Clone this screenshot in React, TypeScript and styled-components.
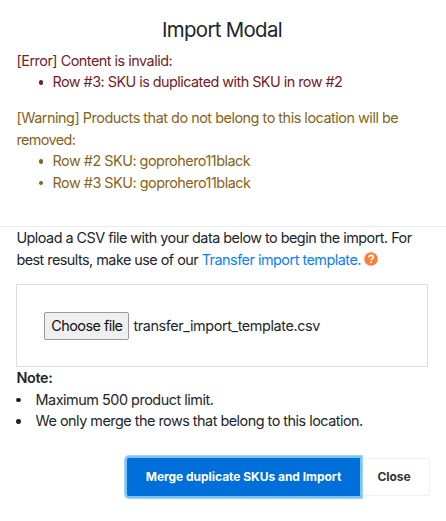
import React from "react";
import styled, { createGlobalStyle } from "styled-components";

const GlobalStyle = createGlobalStyle`
  *, *::before, *::after { box-sizing: border-box; }
  body {
    margin: 0;
    background: #fff;
    color: #212529;
    font-family: Inter, "Liberation Sans", sans-serif;
    font-size: 14.4px;
    line-height: 21.6px;
  }
`;

const Modal = styled.main`
  display: flex;
  flex-direction: column;
  width: 446px;
  height: 521px;
  overflow: hidden;
`;

const Header = styled.header`
  height: 227px;
  padding: 17px 17px 0 16.5px;
  border-bottom: 1px solid #e9ecef;
`;

const Title = styled.h1`
  margin: 0 0 6.5px;
  padding-right: 1.5px;
  font-size: 20.4px;
  font-weight: 400;
  line-height: 26px;
  letter-spacing: -0.67px;
  text-align: center;
`;

const Message = styled.section<{ $tone: "error" | "warning" }>`
  margin-bottom: 14.4px;
  color: ${(p) => (p.$tone === "error" ? "#721c24" : "#856418")};
`;

const Line = styled.div<{ $track?: number }>`
  white-space: nowrap;
  letter-spacing: ${(p) => p.$track ?? 0}px;
`;

const Run = styled.span<{ $track?: number }>`
  letter-spacing: ${(p) => p.$track ?? 0}px;
`;

const List = styled.ul<{ $indent: number; $gap: number }>`
  margin: 0;
  padding: 0 0 0 ${(p) => p.$indent}px;
  list-style: none;
  --gap: ${(p) => p.$gap}px;
`;

const Item = styled.li<{ $track?: number }>`
  display: flex;
  align-items: center;
  gap: var(--gap);
  white-space: nowrap;
  letter-spacing: ${(p) => p.$track ?? 0}px;

  &::before {
    content: "";
    width: 4.6px;
    height: 4.6px;
    margin-top: 1px;
    border-radius: 50%;
    background: currentColor;
  }
`;

const Body = styled.div`
  padding: 0 18px 0 16.4px;
`;

const Link = styled.a<{ $track?: number }>`
  color: #087ffb;
  text-decoration: none;
  letter-spacing: ${(p) => p.$track ?? 0}px;
`;

const Help = styled.svg`
  width: 14px;
  height: 14px;
  margin-left: 3.5px;
  vertical-align: -1px;
`;

const DropArea = styled.div`
  display: flex;
  align-items: center;
  gap: 4px;
  height: 83px;
  margin-top: 14px;
  padding-left: 27px;
  border: 1px solid #dedede;
`;

const FileButton = styled.button`
  width: 85px;
  height: 28px;
  padding: 0;
  border: 1px solid #999;
  border-radius: 2px;
  background: #efefef;
  color: #111;
  font: inherit;
  white-space: nowrap;
`;

const Note = styled.div`
  font-weight: 600;
  letter-spacing: -0.3px;
`;

const Footer = styled.footer`
  display: flex;
  margin: 26px 16px 0 127px;
`;

const Action = styled.button<{ $primary?: boolean }>`
  position: relative;
  z-index: ${(p) => (p.$primary ? 1 : 0)};
  flex: none;
  width: ${(p) => (p.$primary ? 233 : 70)}px;
  height: 38px;
  padding: ${(p) => (p.$primary ? "1px 0 0" : "1px 1px 0 0")};
  border: ${(p) => (p.$primary ? "0" : "1px solid #f1f1f1")};
  border-left-width: 0;
  border-radius: ${(p) => (p.$primary ? "2px 0 0 2px" : "0 3px 3px 0")};
  background: ${(p) => (p.$primary ? "#006fd9" : "#fff")};
  box-shadow: ${(p) => (p.$primary ? "0 0 0 2.7px #7cc3fb" : "none")};
  color: ${(p) => (p.$primary ? "#fff" : "#333")};
  font: 700 12px/18px Inter, "Liberation Sans", sans-serif;
  letter-spacing: -0.03px;
  white-space: nowrap;
`;

export default function App() {
  return (
    <>
      <GlobalStyle />
      <Modal>
        <Header>
          <Title>Import Modal</Title>
          <Message $tone="error">
            <Line $track={-0.49}>[Error] Content is invalid:</Line>
            <List $indent={22} $gap={9.4}>
              <Item $track={-0.53}>Row #3: SKU is duplicated with SKU in row #2</Item>
            </List>
          </Message>
          <Message $tone="warning">
            <Line $track={-0.47}>[Warning] Products that do not belong to this location will be</Line>
            <Line $track={-0.6}>removed:</Line>
            <List $indent={22} $gap={9.4}>
              <Item $track={-0.49}>Row #2 SKU: goprohero11black</Item>
              <Item $track={-0.49}>Row #3 SKU: goprohero11black</Item>
            </List>
          </Message>
        </Header>
        <Body>
          <Line $track={-0.52}>Upload a CSV file with your data below to begin the import. For</Line>
          <Line>
            <Run $track={-0.53}>best results, make use of our </Run>
            <Link $track={-0.5}>Transfer import template.</Link>
            <Help viewBox="0 0 512 512" aria-label="Help">
              <circle cx="256" cy="256" r="248" fill="#fd7e32" />
              <path
                d="M176 196c6-48 38-74 84-74 48 0 82 28 82 70 0 58-82 54-82 110"
                fill="none"
                stroke="#fff"
                strokeWidth="60"
              />
              <circle cx="259" cy="374" r="38" fill="#fff" />
            </Help>
          </Line>
          <DropArea>
            <FileButton>
              <Run $track={-0.53}>Choose file</Run>
            </FileButton>
            <Run $track={-0.39}>transfer_import_template.csv</Run>
          </DropArea>
          <Note>Note:</Note>
          <List $indent={0} $gap={14.6}>
            <Item $track={-0.47}>Maximum 500 product limit.</Item>
            <Item $track={-0.5}>We only merge the rows that belong to this location.</Item>
          </List>
        </Body>
        <Footer>
          <Action $primary>Merge duplicate SKUs and Import</Action>
          <Action>Close</Action>
        </Footer>
      </Modal>
    </>
  );
}
